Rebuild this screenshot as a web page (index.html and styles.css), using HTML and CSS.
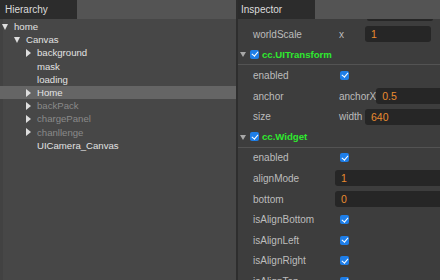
FILE: index.html
```html
<!DOCTYPE html>
<html>
<head>
<title>Editor</title>
<meta charset="UTF-8">
<link rel="stylesheet" href="styles.css">
</head>
<body>

<div class="app">

	<!-- HIERARCHY -->
	<section class="panel hierarchy">
		<div class="tabbar"><div class="tab">Hierarchy</div></div>
		<ul class="tree">
			<li class="node open"><span class="arrow"></span>home</li>
			<li class="node open lv1"><span class="arrow"></span>Canvas</li>
			<li class="node closed lv2"><span class="arrow"></span>background</li>
			<li class="node lv2"><span class="arrow"></span>mask</li>
			<li class="node lv2"><span class="arrow"></span>loading</li>
			<li class="node closed lv2 selected"><span class="arrow"></span>Home</li>
			<li class="node closed lv2 off"><span class="arrow"></span>backPack</li>
			<li class="node closed lv2 off"><span class="arrow"></span>chargePanel</li>
			<li class="node closed lv2 off"><span class="arrow"></span>chanllenge</li>
			<li class="node lv1"><span class="arrow"></span><span class="pad"></span>UICamera_Canvas</li>
		</ul>
	</section>

	<div class="divider"></div>

	<!-- INSPECTOR -->
	<section class="panel inspector">
		<div class="tabbar"><div class="tab">Inspector</div></div>
		<div class="scroll">
			<div class="props">
				<!-- bottom of the row scrolled out of view -->
				<div class="cut"><span class="stub"></span></div>

				<div class="row">
					<span class="label">worldScale</span>
					<span class="value"><span class="sub">x</span><span class="input short">1</span></span>
				</div>

				<div class="comp">
					<span class="fold"></span>
					<span class="check"></span>
					<span class="name">cc.UITransform</span>
				</div>
				<div class="row">
					<span class="label">enabled</span>
					<span class="value"><span class="check"></span></span>
				</div>
				<div class="row">
					<span class="label">anchor</span>
					<span class="value"><span class="sub">anchorX</span><span class="input">0.5</span></span>
				</div>
				<div class="row">
					<span class="label">size</span>
					<span class="value"><span class="sub">width</span><span class="input">640</span></span>
				</div>

				<div class="comp">
					<span class="fold"></span>
					<span class="check"></span>
					<span class="name">cc.Widget</span>
				</div>
				<div class="row">
					<span class="label">enabled</span>
					<span class="value"><span class="check"></span></span>
				</div>
				<div class="row">
					<span class="label">alignMode</span>
					<span class="value"><span class="input wide">1</span></span>
				</div>
				<div class="row">
					<span class="label">bottom</span>
					<span class="value"><span class="input wide">0</span></span>
				</div>
				<div class="row">
					<span class="label">isAlignBottom</span>
					<span class="value"><span class="check"></span></span>
				</div>
				<div class="row">
					<span class="label">isAlignLeft</span>
					<span class="value"><span class="check"></span></span>
				</div>
				<div class="row">
					<span class="label">isAlignRight</span>
					<span class="value"><span class="check"></span></span>
				</div>
				<div class="row">
					<span class="label">isAlignTop</span>
					<span class="value"><span class="check"></span></span>
				</div>
			</div>
		</div>
	</section>

</div>

</body>
</html>
```

FILE: styles.css
```css
body{
	margin: 0px;
	font-family: "Liberation Sans", Arial, sans-serif;
	font-size: 10px;
	background: #3d3d3d;
	color: #bdbdbd;
}

.app{
	display: grid;
	grid-template-columns: 236px 2px 1fr;
	width: 440px;
	height: 280px;
	overflow: hidden;
}

.panel{
	display: flex;
	flex-direction: column;
	overflow: hidden;
	min-width: 0;
}

.divider{
	background: #2e2e2e;
}

/*********************************************************
TABS
**********************************************************/

.tabbar{
	height: 19px;
	flex: none;
	background: #545454;
	display: flex;
}

.tab{
	background: #2c2c2c;
	color: #dcdcdc;
	line-height: 19px;
	padding-left: 5px;
	width: 72px;
	font-size: 10px;
}

.inspector .tab{
	width: 74px;
	padding-left: 3px;
}

/*********************************************************
HIERARCHY
**********************************************************/

.hierarchy{
	background: #474747;
}

.tree{
	flex: 1;
	list-style: none;
	margin: 0px;
	padding: 0px;
	padding-top: 1px;
	border-left: 3px solid #424242;
}

.node{
	height: 13.2px;
	line-height: 13.2px;
	display: flex;
	align-items: center;
	color: #e2e2e2;
	font-size: 9.6px;
	margin-left: -3px;
}

.node.lv1{ padding-left: 12px; }
.node.lv2{ padding-left: 23px; }

.node.off{ color: #8a8a8a; }

.node.selected{
	background: #656565;
	color: #e4e4e4;
}

.arrow{
	width: 14px;
	height: 13px;
	flex: none;
	position: relative;
}

.open > .arrow:before{
	content: '';
	position: absolute;
	left: 2px;
	top: 4px;
	border-left: 3.5px solid transparent;
	border-right: 3.5px solid transparent;
	border-top: 6px solid #dedede;
}

.closed > .arrow:before{
	content: '';
	position: absolute;
	left: 3px;
	top: 2.5px;
	border-top: 4px solid transparent;
	border-bottom: 4px solid transparent;
	border-left: 5.5px solid #dedede;
}

.pad{
	width: 11px;
	flex: none;
}

/*********************************************************
INSPECTOR
**********************************************************/

.inspector{
	background: #3d3d3d;
}

.scroll{
	flex: 1;
	overflow: hidden;
}

.cut{
	height: 5px;
	padding-left: 129px;
}

.stub{
	display: block;
	width: 66px;
	height: 2px;
	background: #262626;
	border-radius: 0px 0px 3px 3px;
}

.row{
	height: 20.6px;
	display: flex;
	align-items: center;
	padding-left: 15px;
}

.label{
	width: 82px;
	flex: none;
	color: #bcbcbc;
}

.value{
	display: flex;
	align-items: center;
	flex: 1;
	min-width: 0;
}

.value > .check{
	margin-left: 5px;
}

.sub{
	min-width: 26px;
	padding-left: 4px;
	color: #bcbcbc;
	flex: none;
}

.input{
	background: #262626;
	border-radius: 3px;
	height: 16px;
	line-height: 16px;
	padding-left: 6px;
	color: #e98b2f;
	width: 90px;
	flex: none;
	font-size: 10.5px;
}

.input.short{
	width: 60px;
}

.input.wide{
	width: 120px;
}

.check{
	width: 9px;
	height: 9px;
	border-radius: 2px;
	background: #1e7ee8;
	flex: none;
	position: relative;
}

.check:after{
	content: '';
	position: absolute;
	left: 3px;
	top: 0.5px;
	width: 2.5px;
	height: 5px;
	border-right: 1.5px solid #fff;
	border-bottom: 1.5px solid #fff;
	transform: rotate(40deg);
}

.comp{
	height: 20.6px;
	display: flex;
	align-items: center;
	border-bottom: 1px solid #535353;
	box-sizing: border-box;
}

.fold{
	width: 12px;
	height: 8px;
	flex: none;
	position: relative;
}

.fold:before{
	content: '';
	position: absolute;
	left: 2px;
	top: 2px;
	border-left: 3px solid transparent;
	border-right: 3px solid transparent;
	border-top: 5px solid #a8a8a8;
}

.comp .check{
	margin-left: 0px;
}

.name{
	margin-left: 3px;
	color: #2fe92f;
	font-weight: bold;
	font-size: 9.6px;
}
```
